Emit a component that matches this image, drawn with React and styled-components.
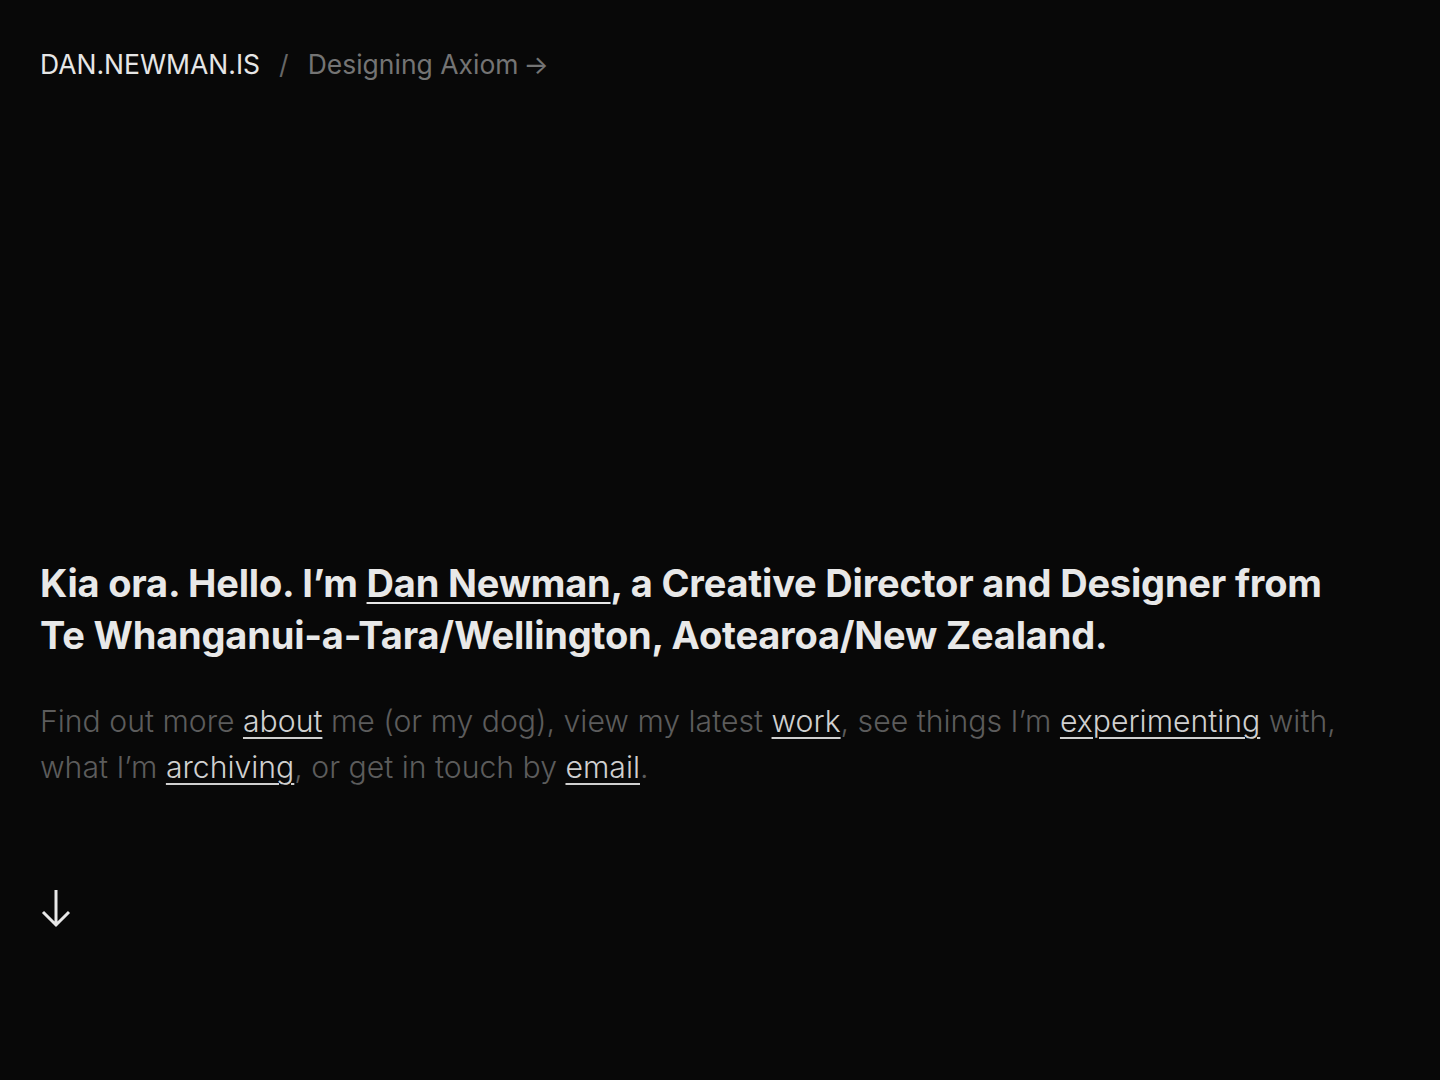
import React from "react";
import styled, { createGlobalStyle } from "styled-components";

const GlobalStyle = createGlobalStyle`
  html, body {
    margin: 0;
    padding: 0;
    background: #080808;
  }
  body {
    font-family: Inter, "Noto Sans", sans-serif;
    color: #e8e8e8;
    -webkit-font-smoothing: antialiased;
  }
`;

const Page = styled.div`
  min-height: 1080px;
  display: flex;
  flex-direction: column;
  padding: 0 40px;
  box-sizing: border-box;
`;

const Header = styled.header`
  display: flex;
  align-items: center;
  gap: 19px;
  height: 128px;
  font-size: 26.5px;
`;

const Brand = styled.a`
  color: #e6e6e6;
  text-decoration: none;
  font-weight: 400;
`;

const Divider = styled.span`
  color: #666;
`;

const Crumb = styled.a`
  display: flex;
  align-items: center;
  gap: 5px;
  color: #747474;
  text-decoration: none;
`;

const Spacer = styled.div`
  flex: 1;
`;

const Intro = styled.section`
  display: flex;
  flex-direction: column;
  gap: 37px;
  max-width: 1320px;
`;

const Headline = styled.h1`
  margin: 0;
  font-size: 38px;
  line-height: 52px;
  font-weight: 700;
  letter-spacing: -0.005em;
  color: #e8e8e8;
`;

const Lead = styled.p`
  margin: 0;
  max-width: 1320px;
  font-size: 30.2px;
  line-height: 46px;
  font-weight: 300;
  letter-spacing: 0;
  color: #5c5c5c;
`;

const Link = styled.a`
  color: ${p => (p.$strong ? "#e8e8e8" : "#d0d0d0")};
  text-decoration: underline;
  text-decoration-thickness: 2px;
  text-underline-offset: 5px;
`;

const ScrollCue = styled.div`
  margin: 98px 0 152px;
  height: 40px;
  display: flex;
  align-items: center;
`;

export default function App() {
  return (
    <>
      <GlobalStyle />
      <Page>
        <Header>
          <Brand href="#">DAN.NEWMAN.IS</Brand>
          <Divider>/</Divider>
          <Crumb href="#">
            Designing Axiom
            <span>→</span>
          </Crumb>
        </Header>
        <Spacer />
        <Intro>
          <Headline>
            Kia ora. Hello. I’m <Link $strong href="#">Dan Newman</Link>, a
            Creative Director and Designer from Te Whanganui-a-Tara/Wellington,
            Aotearoa/New Zealand.
          </Headline>
          <Lead>
            Find out more <Link href="#">about</Link> me (or my dog), view my
            latest <Link href="#">work</Link>, see things I’m{" "}
            <Link href="#">experimenting</Link> with, what I’m{" "}
            <Link href="#">archiving</Link>, or get in touch by{" "}
            <Link href="#">email</Link>.
          </Lead>
        </Intro>
        <ScrollCue>
          <svg width="32" height="40" viewBox="0 0 32 40" fill="none">
            <path
              d="M16 2v35M3 24l13 13 13-13"
              stroke="#e8e8e8"
              strokeWidth="3"
            />
          </svg>
        </ScrollCue>
      </Page>
    </>
  );
}
